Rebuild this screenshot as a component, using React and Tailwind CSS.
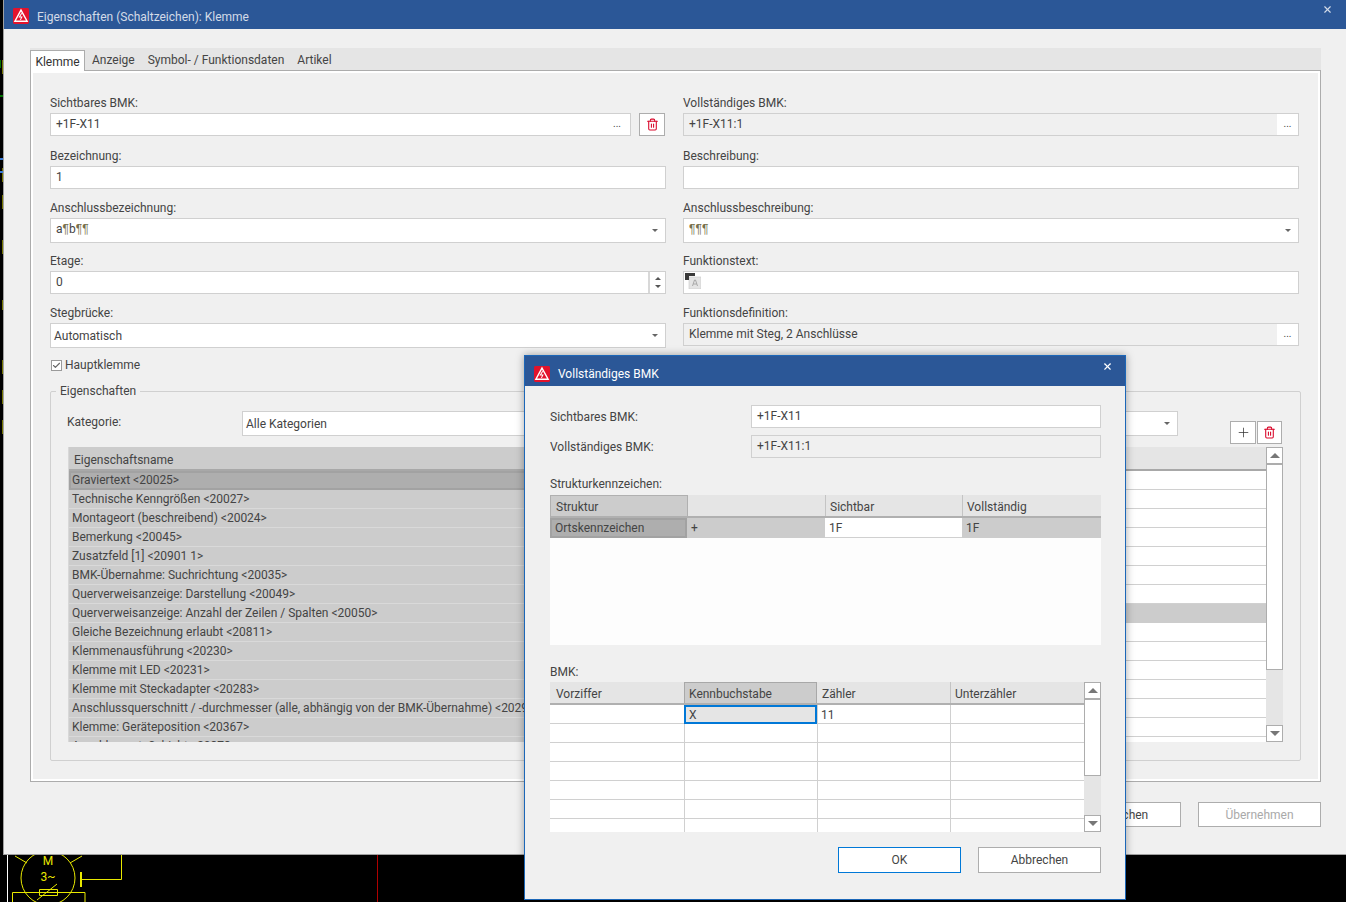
import { Trash2, Plus, Check, X } from "lucide-react";

const font = { fontFamily: 'Roboto, "Noto Sans", sans-serif' };

const props = [
  "Graviertext <20025>",
  "Technische Kenngrößen <20027>",
  "Montageort (beschreibend) <20024>",
  "Bemerkung <20045>",
  "Zusatzfeld [1] <20901 1>",
  "BMK-Übernahme: Suchrichtung <20035>",
  "Querverweisanzeige: Darstellung <20049>",
  "Querverweisanzeige: Anzahl der Zeilen / Spalten <20050>",
  "Gleiche Bezeichnung erlaubt <20811>",
  "Klemmenausführung <20230>",
  "Klemme mit LED <20231>",
  "Klemme mit Steckadapter <20283>",
  "Anschlussquerschnitt / -durchmesser (alle, abhängig von der BMK-Übernahme) <20292>",
  "Klemme: Geräteposition <20367>",
  "Anschlussart: Schicht <20373>",
];

function AppIcon() {
  return (
    <svg width="16" height="16" viewBox="0 0 17 17" className="shrink-0">
      <rect width="17" height="17" rx="1.5" fill="#e3132c" />
      <path d="M8.5 2.2 15 14H2Z" fill="none" stroke="#fff" strokeWidth="1.5" />
      <path d="M9.2 5.6 6.8 9.6h2.6L7.900 12.6" fill="none" stroke="#fff" strokeWidth="1.1" />
    </svg>
  );
}

function Caret() {
  return <span className="w-0 h-0 border-x-[3px] border-x-transparent border-t-[3px] border-t-[#666]" />;
}

function Field({ label, children }) {
  return (
    <div className="h-[52.5px]">
      <div className="h-[18px] leading-[17px] text-[#444]">{label}</div>
      {children}
    </div>
  );
}

function TextBox({ value, className = "" }) {
  return (
    <div className={`h-[23px] border border-[#d0d0d0] bg-white pl-[5px] leading-[21px] ${className}`}>{value}</div>
  );
}

function ReadOnly({ value }) {
  return (
    <div className="h-[23px] border border-[#d0d0d0] bg-[#f0f0f0] flex">
      <div className="flex-1 pl-[5px] leading-[21px]">{value}</div>
      <div className="w-[21px] bg-white text-center leading-[20px] text-[10px]">...</div>
    </div>
  );
}

function Combo({ value, className = "", textClass = "mt-px" }) {
  return (
    <div className={`h-[25px] border border-[#d0d0d0] bg-white flex items-center justify-between pl-[3px] pr-[7px] ${className}`}>
      <span className={textClass}>{value}</span>
      <Caret />
    </div>
  );
}

function ScrollBar({ height, thumb }) {
  return (
    <div className={`w-[17px] shrink-0 bg-[#e5e5e5] flex flex-col ${height}`}>
      <div className="h-[17px] border border-[#adadad] bg-white flex items-center justify-center">
        <span className="w-0 h-0 border-x-[5px] border-x-transparent border-b-[5px] border-b-[#777]" />
      </div>
      <div className={`border border-[#adadad] bg-white ${thumb}`} />
      <div className="flex-1" />
      <div className="h-[17px] border border-[#adadad] bg-white flex items-center justify-center">
        <span className="w-0 h-0 border-x-[5px] border-x-transparent border-t-[5px] border-t-[#777]" />
      </div>
    </div>
  );
}

function Btn({ children, className = "" }) {
  return (
    <div className={`w-[123px] flex items-center justify-center bg-white border border-[#adadad] ${className}`}>
      {children}
    </div>
  );
}

function PropertyTable() {
  return (
    <div className="ml-[17px] w-[1215px] h-[295px] flex overflow-hidden">
      <div className="flex-1 border-l border-[#d8d8d8]">
        <div className="flex h-[24px] border-b-2 border-[#a8a8a8]">
          <div className="w-[520px] bg-[#cccccc] pl-[5px] leading-[26px]">Eigenschaftsname</div>
          <div className="flex-1 bg-[#e5e5e5]" />
        </div>
        {props.map((p, i) => (
          <div key={p} className="flex h-[19px]">
            {i === 0 ? (
              <div className="w-[520px] bg-[#aeaeae] border-2 border-[#a2a2a2] pl-[1px] leading-[15px] whitespace-nowrap overflow-hidden">{p}</div>
            ) : (
              <div className="w-[520px] bg-[#cccccc] border-b border-[#d9d9d9] pl-[3px] leading-[18px] whitespace-nowrap overflow-hidden">{p}</div>
            )}
            <div className={i === 7 ? "flex-1 bg-[#cccccc]" : "flex-1 bg-white border-b border-[#d0d0d0]"} />
          </div>
        ))}
      </div>
      <ScrollBar height="h-[295px]" thumb="h-[206px]" />
    </div>
  );
}

function StructureTable() {
  return (
    <div className="w-[551px] h-[150px] bg-[#fdfdfd]">
      <div className="flex h-[23px] bg-[#e5e5e5] border-b-2 border-[#b0b0b0] leading-[25px]">
        <div className="w-[138px] bg-[#cccccc] border-t border-x border-[#b0b0b0] pl-[5px] leading-[23px]">Struktur</div>
        <div className="w-[137px]" />
        <div className="w-[137px] border-l border-[#c4c4c4] pl-[4px]">Sichtbar</div>
        <div className="flex-1 border-l border-[#c4c4c4] pl-[4px]">Vollständig</div>
      </div>
      <div className="flex h-[20px] bg-[#cccccc] leading-[21px]">
        <div className="w-[137px] bg-[#aeaeae] border-2 border-[#a2a2a2] pl-[3px] leading-[17px]">Ortskennzeichen</div>
        <div className="w-[138px] pl-[4px]">+</div>
        <div className="w-[137px] bg-white border-b border-[#d0d0d0] pl-[4px]">1F</div>
        <div className="flex-1 pl-[4px]">1F</div>
      </div>
    </div>
  );
}

function BmkTable() {
  const rows = [0, 1, 2, 3, 4, 5, 6];
  return (
    <div className="w-[551px] h-[150px] flex overflow-hidden">
      <div className="flex-1 bg-white">
        <div className="flex h-[23px] bg-[#e5e5e5] border-b-2 border-[#b0b0b0] leading-[24px]">
          <div className="w-[134px] pl-[6px]">Vorziffer</div>
          <div className="w-[133px] bg-[#cccccc] border-t border-x border-[#a8a8a8] pl-[4px] leading-[22px]">Kennbuchstabe</div>
          <div className="w-[133px] pl-[5px]">Zähler</div>
          <div className="flex-1 border-l border-[#c4c4c4] pl-[4px]">Unterzähler</div>
        </div>
        {rows.map((r) => (
          <div key={r} className="flex h-[19px] border-b border-[#d0d0d0] leading-[21px]">
            <div className="w-[134px]" />
            {r === 0 ? (
              <div className="w-[133px] bg-[#e5e5e5] border-2 border-[#0078d7] -mb-px leading-[16px] pl-[3px]">X</div>
            ) : (
              <div className="w-[133px] border-l border-[#d0d0d0]" />
            )}
            <div className="w-[133px] border-l border-[#d0d0d0] pl-[3px]">{r === 0 ? "11" : ""}</div>
            <div className="flex-1 border-l border-[#d0d0d0]" />
          </div>
        ))}
      </div>
      <ScrollBar height="h-[150px]" thumb="h-[77px]" />
    </div>
  );
}

function BmkDialog() {
  return (
    <div className="absolute left-[524px] top-[355px] w-[602px] h-[545px] bg-[#f0f0f0] border border-[#1c67b8] shadow-[0_0_8px_rgba(0,0,0,0.35)]">
      <div className="h-[30px] bg-[#2b5797] flex items-center pt-[5px] pl-[9px] pr-[12px] text-white">
        <AppIcon />
        <span className="ml-[8px] flex-1">Vollständiges BMK</span>
        <X size={11} strokeWidth={2.5} className="self-start" />
      </div>
      <div className="pl-[25px] pt-[19px]">
        <div className="flex h-[23px]">
          <div className="w-[201px] h-[23px] leading-[24px]">Sichtbares BMK:</div>
          <TextBox value="+1F-X11" className="w-[350px]" />
        </div>
        <div className="flex h-[23px] mt-[7px]">
          <div className="w-[201px] h-[23px] leading-[24px]">Vollständiges BMK:</div>
          <TextBox value="+1F-X11:1" className="w-[350px] !bg-[#f0f0f0]" />
        </div>
        <div className="mt-[17px] h-[20px] leading-[18px]">Strukturkennzeichen:</div>
        <StructureTable />
        <div className="mt-[19px] h-[18px] leading-[16px]">BMK:</div>
        <BmkTable />
        <div className="flex justify-end gap-[17px] w-[551px] mt-[15px]">
          <Btn className="h-[26px] !border-[#0078d7]">OK</Btn>
          <Btn className="h-[26px]">Abbrechen</Btn>
        </div>
      </div>
    </div>
  );
}

function MainWindow() {
  return (
    <div className="absolute left-[3px] top-0 w-[1343px] h-[855px] bg-[#f0f0f0] border-b border-l border-[#a0a0a0]">
      <div className="h-[29px] bg-[#2b5797] flex items-center pt-[3px] pl-[9px] pr-[13px] text-[#d3dbe8]">
        <AppIcon />
        <span className="ml-[8px] flex-1 pt-[2px]">Eigenschaften (Schaltzeichen): Klemme</span>
        <X size={11} strokeWidth={2.5} className="self-start mt-px" />
      </div>
      <div className="pl-[26px] pt-[19px]">
        <div className="w-[1291px] h-[22px] bg-[#e5e5e5] flex items-end relative z-10">
          <div className="h-[21px] w-[55px] -mb-px bg-white border-x border-t border-[#acacac] text-center leading-[23px] text-[#333]">Klemme</div>
          <div className="flex gap-[13px] pl-[7px] h-[22px] leading-[25px]">
            <span>Anzeige</span>
            <span>Symbol- / Funktionsdaten</span>
            <span>Artikel</span>
          </div>
        </div>
        <div className="w-[1291px] h-[712px] border border-[#acacac] outline-2 -outline-offset-3 outline-white">
          <div className="pt-[24px] pl-[19px]">
            <div className="grid grid-cols-2 gap-x-[17px] w-[1249px]">
              <Field label="Sichtbares BMK:">
                <div className="flex gap-[8px]">
                  <div className="flex-1 flex h-[23px] border border-[#d0d0d0] bg-white pl-[5px] leading-[21px]">
                    <span className="flex-1">+1F-X11</span>
                    <span className="w-[17px] text-[10px] leading-[20px]">...</span>
                  </div>
                  <div className="w-[26px] h-[23px] mr-px bg-white border border-[#adadad] flex items-center justify-center">
                    <Trash2 size={13} className="text-[#d9082b]" />
                  </div>
                </div>
              </Field>
              <Field label="Vollständiges BMK:">
                <ReadOnly value="+1F-X11:1" />
              </Field>
              <Field label="Bezeichnung:">
                <TextBox value="1" />
              </Field>
              <Field label="Beschreibung:">
                <TextBox />
              </Field>
              <Field label="Anschlussbezeichnung:">
                <Combo
                  value={
                    <>
                      a<span className="text-[#77704c] font-['Liberation_Sans']">¶</span>b
                      <span className="text-[#77704c] font-['Liberation_Sans']">¶¶</span>
                    </>
                  }
                  className="pl-[5px] leading-none"
                  textClass="-mt-[3px]"
                />
              </Field>
              <Field label="Anschlussbeschreibung:">
                <Combo value="¶¶¶" className="pl-[5px] leading-none" textClass="-mt-[3px] text-[#77704c] font-['Liberation_Sans']" />
              </Field>
              <Field label="Etage:">
                <div className="h-[23px] border border-[#d0d0d0] bg-white flex leading-[21px]">
                  <span className="flex-1 pl-[5px]">0</span>
                  <div className="w-[17px] border-l-2 border-[#d8d8d8] flex flex-col items-center justify-center gap-[5px]">
                    <span className="w-0 h-0 border-x-[3px] border-x-transparent border-b-[3px] border-b-[#555]" />
                    <span className="w-0 h-0 border-x-[3px] border-x-transparent border-t-[3px] border-t-[#555]" />
                  </div>
                </div>
              </Field>
              <Field label="Funktionstext:">
                <div className="h-[23px] border border-[#d0d0d0] bg-white pl-[1px] pt-px">
                  <svg width="16" height="16" viewBox="0 0 16 16" className="block">
                    <rect x="4" y="4" width="12" height="12" fill="#e4e4e4" stroke="#c8c8c8" strokeWidth="0.6" />
                    <path d="M0 0h10v3H4v4H0Z" fill="#3a3a3a" />
                    <path d="M7.500 13l2-6h1l2 6M8.400 11h3.200" fill="none" stroke="#999" strokeWidth="0.8" />
                  </svg>
                </div>
              </Field>
              <Field label="Stegbrücke:">
                <Combo value="Automatisch" />
              </Field>
              <Field label="Funktionsdefinition:">
                <ReadOnly value="Klemme mit Steg, 2 Anschlüsse" />
              </Field>
            </div>
            <div className="flex items-center h-[15px] gap-[3px] pl-px">
              <div className="w-[11px] h-[11px] border border-[#9a9a9a] bg-white flex items-center justify-center">
                <Check size={9} strokeWidth={3} className="text-[#666]" />
              </div>
              <span>Hauptklemme</span>
            </div>
            <div className="relative mt-[18px] w-[1251px] h-[370px] border border-[#d0d0d0] rounded-[2px] pt-[19px]">
              <span className="absolute left-[5px] -top-[8px] px-[4px] bg-[#f0f0f0] leading-[15px]">Eigenschaften</span>
              <div className="flex items-start h-[33px] pl-[16px] mb-[3px]">
                <div className="w-[175px] leading-[22px]">Kategorie:</div>
                <Combo value="Alle Kategorien" className="w-[936px]" />
                <div className="flex gap-px ml-[52px] mt-[10px]">
                  <div className="w-[26px] h-[23px] bg-white border border-[#adadad] flex items-center justify-center">
                    <Plus size={15} strokeWidth={1.2} className="text-[#333]" />
                  </div>
                  <div className="w-[25px] h-[23px] bg-white border border-[#adadad] flex items-center justify-center">
                    <Trash2 size={13} className="text-[#d9082b]" />
                  </div>
                </div>
              </div>
              <PropertyTable />
            </div>
          </div>
        </div>
        <div className="flex justify-end gap-[17px] w-[1291px] mt-[20px]">
          <Btn className="h-[25px]">OK</Btn>
          <Btn className="h-[25px]">Abbrechen</Btn>
          <Btn className="h-[25px] text-[#a9a9a9]">Übernehmen</Btn>
        </div>
      </div>
    </div>
  );
}

function Canvas() {
  return (
    <svg width="1346" height="902" viewBox="0 0 1346 902" className="block" fill="none">
      <g stroke="#e8e800" strokeWidth="1">
        <path d="M3 60v14M3 143h1M3 168v14M3 195v14M3 240v14M3 272h1M3 300v10M3 318h1M3 360v14M3 390v14M3 420v14" />
        <circle cx="48" cy="878" r="27" />
        <path d="M15 856l12 7M82 856l-12 7M81.500 879.500h40v-25M12.500 902v-9.500h72.500V902M39.500 889.500h18v6h-18ZM37 900l20-16" />
        <path d="M81 872v15" strokeWidth="2" />
        <text x="48" y="865" fill="#e8e800" stroke="none" textAnchor="middle" fontSize="12">M</text>
        <text x="48" y="881" fill="#e8e800" stroke="none" textAnchor="middle" fontSize="12">3~</text>
      </g>
      <path d="M0 60v8M0 96h3" stroke="#00e000" />
      <path d="M0 159h3M0 172h3" stroke="#3a7bd5" strokeWidth="2" />
      <path d="M7.500 855v47" stroke="#ffffff" />
      <path d="M377.500 855v47" stroke="#b00000" />
    </svg>
  );
}

export default function App() {
  return (
    <div className="relative w-[1346px] h-[902px] overflow-hidden bg-black text-[12px] text-[#444]" style={font}>
      <Canvas />
      <MainWindow />
      <BmkDialog />
    </div>
  );
}
